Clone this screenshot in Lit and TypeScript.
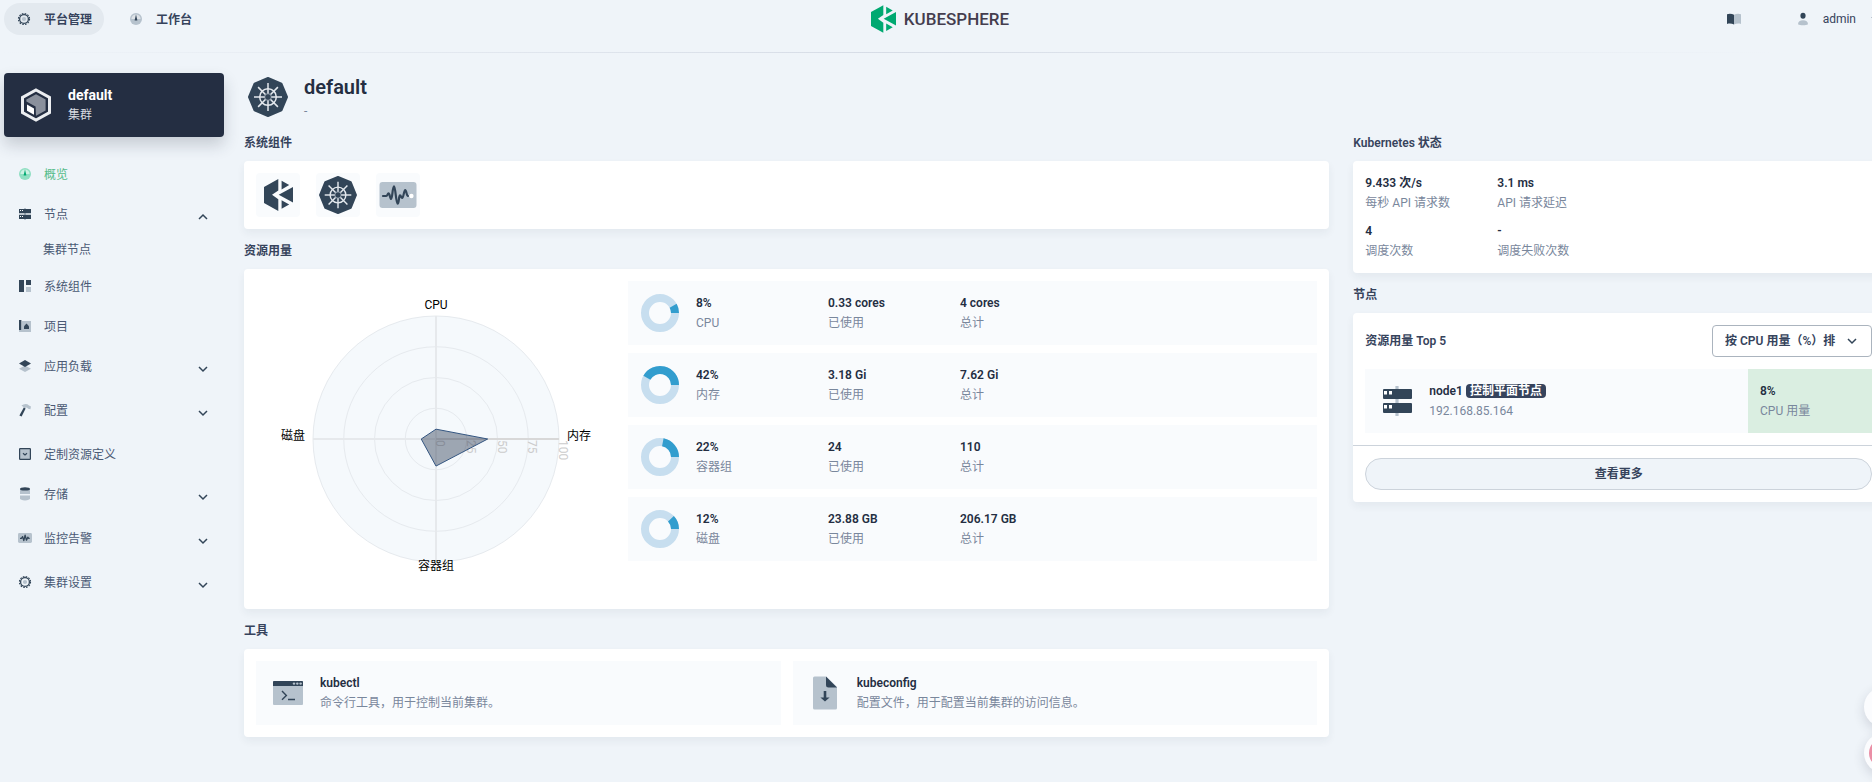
import { LitElement, html, svg, css, nothing } from "lit";
import { customElement, property, state } from "lit/decorators.js";
import { classMap } from "lit/directives/class-map.js";

const DARK = "#324558";
const PALE = "#b6c2cd";

/* ---------- icon set ---------- */

const gear = svg`
  <circle cx="8" cy="8" r="5.5" fill="none" stroke=${DARK} stroke-width="1.2" stroke-dasharray="1.6 1.28"/>
  <circle cx="8" cy="8" r="4.4" fill="none" stroke=${DARK} stroke-width="1.3"/>
  <circle cx="8" cy="8" r="2.1" fill=${PALE}/>`;

const dial = (base: string, hand: string) => svg`
  <circle cx="8" cy="8" r="6" fill=${base}/>
  <path d="M3.4 8a4.6 4.6 0 0 1 9.2 0z" fill="#fff" opacity=".55"/>
  <path d="M8 3.4 9.4 9.4H6.6z" fill=${hand}/>`;

const pulse = svg`
  <rect x="1" y="3" width="14" height="10" rx="1.4" fill=${PALE}/>
  <path d="M3 8.4h1.4L5.6 6.6l1.2 4 1.3-5.4 1.4 5 1.3-3 .9 1.2h1" fill="none" stroke=${DARK} stroke-width="1.3" stroke-linejoin="round"/>`;

const ICONS: Record<string, unknown> = {
  gear,
  dial: dial(PALE, DARK),
  dialGreen: dial("#8fdfc2", "#00a971"),
  nodes: svg`
    <path d="M7 2h2v12H7z" fill=${PALE}/>
    <path d="M2 3h12v4.200H2zM2 8.800h12V13H2z" fill=${DARK}/>
    <path d="M3 4h1v1H3zM5 4h1v1H5zM3 10h1v1H3zM5 10h1v1H5z" fill="#fff"/>`,
  components: svg`
    <path d="M2 2h5v12H2zM9 2h5v5H9z" fill=${DARK}/><path d="M9 9h5v5H9z" fill=${PALE}/>`,
  project: svg`
    <path d="M5 3h9v11H2v-2h3z" fill=${PALE}/><path d="M2 2h2.400v10H2z" fill=${DARK}/>
    <path d="M7 11V8.200L9.500 5.600 12 8.200V11z" fill=${DARK}/>`,
  layers: svg`
    <path d="M8 14 2 10.800 8 7.600l6 3.200z" fill=${PALE}/><path d="M8 9 2 5.500 8 2l6 3.500z" fill=${DARK}/>`,
  hammer: svg`
    <path d="M4.400 3.600C7 1.600 10 1.600 12 3.400l2 1.200-.6 2.600-2.200-.4-1.400-1.300-2.200.4z" fill=${PALE}/>
    <path d="m6.800 5.600 1.800 1-4 8-2.200-1.200z" fill=${DARK}/>`,
  crd: svg`
    <rect x="2.600" y="2.600" width="10.800" height="10.800" rx=".6" fill=${PALE} stroke=${DARK} stroke-width="1.200"/>
    <path d="m6 7.200 2 1.800 2-1.800" fill="none" stroke=${DARK} stroke-width="1.200"/>`,
  storage: svg`
    <path d="M3 3h10v5H3zM3 9.400h10v3.400c0 .8-2.200 1.600-5 1.600s-5-.8-5-1.600z" fill=${PALE}/>
    <ellipse cx="8" cy="2.900" rx="5" ry="1.600" fill=${DARK}/>`,
  pulse,
  book: svg`
    <path d="M1 3.200c2-.8 5-.7 7 .6v9.800c-2-1.200-5-1.300-7-.6z" fill=${DARK}/>
    <path d="M8 3.800c2-1.300 5-1.400 7-.6V13c-2-.7-5-.6-7 .6z" fill=${PALE}/>`,
  user: svg`
    <ellipse cx="8" cy="4.800" rx="2.600" ry="3" fill=${DARK}/>
    <path d="M3 13.200C3 10.400 5 9.200 8 9.200s5 1.200 5 4c-2 1.400-8 1.400-10 0z" fill=${PALE}/>`,
  down: svg`<path d="m4 6 4 4 4-4" fill="none" stroke=${DARK} stroke-width="1.500"/>`,
  up: svg`<path d="m4 10 4-4 4 4" fill="none" stroke=${DARK} stroke-width="1.500"/>`,
};

const icon = (name: string, size = 16) =>
  html`<svg width=${size} height=${size} viewBox="0 0 16 16" aria-hidden="true">${ICONS[name]}</svg>`;

const ksMark = (color: string, w: number, h: number) => html`
  <svg width=${w} height=${h} viewBox="0 0 29 32" aria-hidden="true">
    <path fill=${color} d="M0 8 14.300 0v11.500L8 15.800l6.300 4.500V32L0 24zM17.600 1.700l7.600 4.400-7.600 4.400zM29 8v15.600L14.700 15.800zM17.600 21.200l7.600 4.300-7.600 4.300z"/>
  </svg>`;

const OCTAGON = Array.from({ length: 8 }, (_, i) => {
  const a = (i * Math.PI) / 4;
  return `${(20 + 19 * Math.sin(a)).toFixed(2)},${(20 - 19 * Math.cos(a)).toFixed(2)}`;
}).join(" ");

const helm = (size: number) => html`
  <svg width=${size} height=${size} viewBox="0 0 40 40" aria-hidden="true">
    <polygon points=${OCTAGON} fill=${DARK} stroke=${DARK} stroke-width="2" stroke-linejoin="round"/>
    <g stroke="#e4e9ee" fill="none" stroke-width="1.500">
      <circle cx="20" cy="20" r="8.300"/>
      ${[0, 45, 90, 135, 180, 225, 270, 315].map(
        (a) => svg`<path d="M20 17.400V6" transform="rotate(${a} 20 20)"/>`
      )}
    </g>
    <circle cx="20" cy="20" r="3.400" fill=${DARK} stroke="#b6c2cd" stroke-width=".8"/>
  </svg>`;

const cube = html`
  <svg width="32" height="34" viewBox="0 0 32 34" aria-hidden="true">
    <path d="M16 2 29.500 9.400v15.200L16 32 2.500 24.600V9.400z" fill="none" stroke="#eceef1" stroke-width="3"/>
    <path d="M16 6.200 25.600 11.600v10.800L16 27.800l-.4-9.200-9.200-5V11.600z" fill="#8a909c"/>
    <path d="m7 16.400 7 4v6.400l-7-4z" fill="#fff"/>
  </svg>`;

const wave = html`
  <svg width="38" height="28" viewBox="0 0 38 28" aria-hidden="true">
    <rect x=".5" y="1" width="37" height="26" rx="3" fill=${PALE}/>
    <path d="M4 15h3.200c1.400 0 1.200-2.600 2.400-2.600S11 18 12.200 18s1.300-12.600 2.800-12.600S17 22.600 18.600 22.600s1-8.200 2.400-8.200.8 2.600 2.200 2.600 1.700-8 3-8 1.200 6 2.800 6" fill="none" stroke=${DARK} stroke-width="2.200" stroke-linecap="round"/>
    <circle cx="32.400" cy="15" r="2.200" fill="#fff"/>
  </svg>`;

const terminal = html`
  <svg width="40" height="40" viewBox="0 0 40 40" aria-hidden="true">
    <rect x="5" y="8" width="30" height="24" rx="1" fill=${PALE}/>
    <path d="M5 9q0-1 1-1h28q1 0 1 1v4H5z" fill=${DARK}/>
    <g fill=${PALE}><circle cx="26" cy="10.600" r="1.200"/><circle cx="29.300" cy="10.600" r="1.200"/><circle cx="32.600" cy="10.600" r="1.200"/></g>
    <path d="m14 18 4.400 4.400L14 26.800M20 26.500h7" fill="none" stroke=${DARK} stroke-width="1.400"/>
  </svg>`;

const download = html`
  <svg width="40" height="40" viewBox="0 0 40 40" aria-hidden="true">
    <path d="M10 3.500h11L32 14v21q0 1.500-1.500 1.500h-21Q8 36.500 8 35V5q0-1.500 1.500-1.500z" fill=${PALE}/>
    <path d="M21 3.500 32 14.500h-8.500q-2.500 0-2.500-2.500z" fill=${DARK}/>
    <path d="M18.700 18h2.600v6.400h3.300L20 28.600l-4.600-4.200h3.300z" fill=${DARK}/>
  </svg>`;

const server = html`
  <svg width="40" height="40" viewBox="0 0 40 40" aria-hidden="true">
    <path d="M18.400 5h3.200v30h-3.200z" fill=${PALE}/>
    <rect x="6" y="8" width="29" height="10" rx="1" fill=${DARK}/>
    <rect x="6" y="22" width="29" height="10" rx="1" fill=${DARK}/>
    <path d="M7 10h3v3.600H7zM12 10h3v3.600h-3zM7 24h3v3.600H7zM12 24h3v3.600h-3z" fill="#fff"/>
  </svg>`;

/* ---------- shared styles ---------- */

const base = css`
  * { box-sizing: border-box; }
  svg { display: block; flex: none; }
  button, select { font: inherit; color: inherit; border: 0; background: none; padding: 0; margin: 0; cursor: pointer; }
  a { color: inherit; text-decoration: none; }
  h1, h2, p, ul { margin: 0; padding: 0; }
  ul { list-style: none; }
`;

/* ---------- data ---------- */

interface NavItem { label: string; icon: string; active?: boolean; group?: boolean; children?: string[]; }

const NAV: NavItem[] = [
  { label: "概览", icon: "dialGreen", active: true },
  { label: "节点", icon: "nodes", group: true, children: ["集群节点"] },
  { label: "系统组件", icon: "components" },
  { label: "项目", icon: "project" },
  { label: "应用负载", icon: "layers", group: true },
  { label: "配置", icon: "hammer", group: true },
  { label: "定制资源定义", icon: "crd" },
  { label: "存储", icon: "storage", group: true },
  { label: "监控告警", icon: "pulse", group: true },
  { label: "集群设置", icon: "gear", group: true },
];

const USAGE = [
  { name: "CPU", percent: 8, used: "0.33 cores", total: "4 cores" },
  { name: "内存", percent: 42, used: "3.18 Gi", total: "7.62 Gi" },
  { name: "容器组", percent: 22, used: "24", total: "110" },
  { name: "磁盘", percent: 12, used: "23.88 GB", total: "206.17 GB" },
];

const STATUS = [
  ["9.433 次/s", "每秒 API 请求数"],
  ["3.1 ms", "API 请求延迟"],
  ["4", "调度次数"],
  ["-", "调度失败次数"],
];

/* ---------- elements ---------- */

@customElement("ks-topbar")
class Topbar extends LitElement {
  static styles = [base, css`
    :host { display: block; }
    .bar { display: grid; grid-template-columns: 1fr auto 1fr; align-items: start; height: 52px; margin-right: -12px; padding: 3px 0 0 4px; color: #36435c; }
    .tabs { display: flex; gap: 12px; }
    .tab { display: flex; align-items: center; gap: 12px; height: 32px; padding: 0 12px; border-radius: 16px; font-weight: 600; }
    .tab span { padding-top: 2px; }
    .tab.on { background: #e3e9ef; }
    .logo { display: flex; align-items: center; gap: 8px; height: 32px; margin-right: 8px; color: #443d4e; font: 500 17px/32px "Roboto", sans-serif; }
    .mark { margin-top: -1px; }
    .right { display: flex; justify-content: flex-end; }
    .tool { display: flex; align-items: center; gap: 12px; height: 32px; }
    .help { margin-right: 53px; }
    .rule { height: 1px; margin-right: 100px; background: linear-gradient(90deg, rgba(214, 220, 230, 0), #d6dce6 50%, rgba(214, 220, 230, 0)); }
  `];
  render() {
    return html`
      <header class="bar">
        <nav class="tabs">
          <button class="tab on">${icon("gear")}<span>平台管理</span></button>
          <button class="tab">${icon("dial")}<span>工作台</span></button>
        </nav>
        <a class="logo" href="#"><span class="mark">${ksMark("#00a971", 25, 28)}</span>KUBESPHERE</a>
        <div class="right">
          <button class="tool help" aria-label="帮助">${icon("book")}</button>
          <button class="tool">${icon("user")}admin ${icon("down")}</button>
        </div>
      </header>
      <div class="rule"></div>`;
  }
}

@customElement("ks-sidebar")
class Sidebar extends LitElement {
  @state() private open = new Set<string>(["节点"]);

  static styles = [base, css`
    :host { display: block; }
    .cluster { display: flex; align-items: center; gap: 16px; width: 100%; height: 64px; padding: 0 16px; border-radius: 4px; background: #242e42; color: #fff; text-align: left; box-shadow: 0 8px 16px rgba(36, 46, 66, .2); }
    .name { display: block; font-size: 14px; font-weight: 700; line-height: 20px; }
    .kind { display: block; line-height: 20px; color: #d8dbe1; }
    .nav { margin-top: 17px; color: #4a5974; }
    .row { display: flex; align-items: center; gap: 11px; width: 100%; height: 40px; padding: 0 13px; text-align: left; }
    .row.on { color: #55bc8a; }
    .text { flex: 1; padding-top: 2px; }
    .arrow { padding-top: 6px; }
    .group { padding-bottom: 4px; }
    .group.open { padding-bottom: 0; }
    .sub { display: flex; align-items: center; height: 32px; padding-left: 39px; }
  `];

  private toggle(label: string) {
    const next = new Set(this.open);
    next.has(label) ? next.delete(label) : next.add(label);
    this.open = next;
  }

  render() {
    return html`
      <button class="cluster">
        ${cube}<span><span class="name">default</span><span class="kind">集群</span></span>
      </button>
      <ul class="nav">
        ${NAV.map((n) => {
          if (!n.group) {
            return html`<li><a class=${classMap({ row: true, on: !!n.active })} href="#">${icon(n.icon)}<span class="text">${n.label}</span></a></li>`;
          }
          const open = this.open.has(n.label);
          return html`
            <li class=${classMap({ group: true, open })}>
              <button class="row" aria-expanded=${open ? "true" : "false"} @click=${() => this.toggle(n.label)}>
                ${icon(n.icon)}<span class="text">${n.label}</span><span class="arrow">${icon(open ? "up" : "down")}</span>
              </button>
              ${open ? n.children?.map((c) => html`<a class="sub" href="#">${c}</a>`) : nothing}
            </li>`;
        })}
      </ul>`;
  }
}

@customElement("ks-donut")
class Donut extends LitElement {
  @property({ type: Number }) percent = 0;
  static styles = [base, css`:host { display: block; }`];
  render() {
    const a = (this.percent / 100) * 2 * Math.PI;
    const x = 20 + 15 * Math.cos(a);
    const y = 20 - 15 * Math.sin(a);
    return html`
      <svg width="40" height="40" viewBox="0 0 40 40" aria-hidden="true">
        <circle cx="20" cy="20" r="15" fill="none" stroke="#c7deef" stroke-width="8"/>
        <path d="M35 20A15 15 0 ${a > Math.PI ? 1 : 0} 0 ${x} ${y}" fill="none" stroke="#329dce" stroke-width="8"/>
      </svg>`;
  }
}

@customElement("ks-radar")
class Radar extends LitElement {
  static styles = [base, css`
    :host { display: block; }
    .label { font-size: 12px; fill: #000; }
    .tick { font-size: 12px; fill: #ccc; }
  `];
  render() {
    const cx = 180, cy = 158, R = 123;
    const [cpu, mem, pod, disk] = USAGE.map((u) => (u.percent / 100) * R);
    const shape = `${cx},${cy - cpu} ${cx + mem},${cy} ${cx},${cy + pod} ${cx - disk},${cy}`;
    return html`
      <svg width="360" height="316" viewBox="0 0 360 316" role="img" aria-label="资源用量">
        <circle cx=${cx} cy=${cy} r=${R} fill="#f5f9fc"/>
        ${[0.25, 0.5, 0.75, 1].map((k) => svg`<circle cx=${cx} cy=${cy} r=${R * k} fill="none" stroke="#e6eaee"/>`)}
        <path d="M${cx} ${cy - R}V${cy + R}M${cx - R} ${cy}H${cx}" stroke="#e6e9ec" stroke-width="2"/>
        <path d="M${cx} ${cy}H${cx + R}" stroke="#d8d8d8" stroke-width="2"/>
        ${[0, 25, 50, 75, 100].map((t) => svg`<text class="tick" transform="translate(${cx + (R * t) / 100} ${cy + 1}) rotate(90)">${t}</text>`)}
        <polygon points=${shape} fill="#324158" fill-opacity=".45" stroke="#345681"/>
        <text class="label" x=${cx} y="28" text-anchor="middle">CPU</text>
        <text class="label" x="311" y="159">内存</text>
        <text class="label" x=${cx} y="289" text-anchor="middle">容器组</text>
        <text class="label" x="49" y="159" text-anchor="end">磁盘</text>
      </svg>`;
  }
}

@customElement("app-root")
class AppRoot extends LitElement {
  static styles = [base, css`
    :host { display: block; min-height: 100vh; overflow: clip; background: #eff4f9; color: #242e42; font: 12px/20px "Roboto", "Noto Sans CJK SC", sans-serif; }
    .page { display: grid; grid-template-columns: 220px minmax(0, 1fr); gap: 20px; padding: 20px 0 20px 4px; margin-right: -12px; }
    .head { display: flex; align-items: flex-start; gap: 16px; padding: 4px 4px 0; margin-bottom: 12px; }
    .title { font-size: 20px; line-height: 20px; font-weight: 600; }
    .desc { margin-top: 4px; color: #79879c; }
    .cols { display: grid; grid-template-columns: repeat(3, minmax(0, 1fr)); gap: 24px; align-items: start; }
    .main { grid-column: span 2; }
    .section { margin-bottom: 12px; }
    .heading { margin-bottom: 8px; font-size: 12px; line-height: 20px; font-weight: 600; color: #36435c; }
    .card { padding: 12px; border-radius: 4px; background: #fff; box-shadow: 0 4px 8px rgba(36, 46, 66, .06); }
    .tiles { display: flex; gap: 16px; }
    .tile { display: grid; place-items: center; width: 44px; height: 44px; border-radius: 4px; background: #f9fbfd; }
    .usage { display: grid; grid-template-columns: 360px minmax(0, 1fr); gap: 12px; }
    .rows { display: grid; gap: 8px; align-content: start; }
    .row { display: flex; align-items: center; gap: 12px; height: 64px; padding: 0 12px; background: #f9fbfd; }
    .rows .row ks-donut { margin-right: 4px; }
    .stat { width: 120px; }
    .val { font-weight: 600; }
    .key { color: #79879c; }
    .tools { display: grid; grid-template-columns: 1fr 1fr; gap: 12px; }
    .tool { width: 100%; text-align: left; }
    .tool span { display: block; }
    .status { display: grid; grid-template-columns: 120px 120px; gap: 8px 12px; }
    .top { display: flex; align-items: center; justify-content: space-between; margin-bottom: 12px; font-weight: 600; color: #36435c; }
    .picker { position: relative; }
    .sort { appearance: none; display: block; width: 160px; height: 32px; padding: 0 28px 0 12px; border: 1px solid #abb4be; border-radius: 4px; background: #fff; font-weight: 600; color: #36435c; }
    .picker svg { position: absolute; right: 12px; top: 8px; pointer-events: none; }
    .nodes { padding-right: 12px; }
    .node { display: flex; height: 64px; background: #f9fbfd; }
    .info { display: flex; align-items: center; flex: 1; gap: 12px; padding: 0 12px; }
    .load { width: 124px; padding: 12px; background: #daeee1; }
    .tag { display: inline-block; padding: 0 4px; border-radius: 4px; background: #36435c; color: #fff; line-height: 14px; }
    .foot { margin: 12px -12px 0; padding: 12px 12px 0; border-top: 1px solid #ccd3db; }
    .more { display: block; width: 100%; height: 32px; border: 1px solid #ccd3db; border-radius: 16px; background: #eff4f9; font-weight: 600; color: #36435c; }
    .float { position: fixed; right: -32px; width: 40px; height: 40px; border-radius: 50%; background: #fbfcfe; box-shadow: 0 4px 12px rgba(36, 46, 66, .16); }
    .float.first { bottom: 55px; }
    .float.second { bottom: 9px; display: grid; place-items: center; }
    .dot { width: 30px; height: 30px; border-radius: 50%; background: #ea8fa6; }
  `];

  private stat(value: unknown, label: string) {
    return html`<div class="stat"><p class="val">${value}</p><p class="key">${label}</p></div>`;
  }

  render() {
    return html`
      <ks-topbar></ks-topbar>
      <div class="page">
        <ks-sidebar></ks-sidebar>
        <main>
          <div class="head">
            ${helm(40)}
            <div><h1 class="title">default</h1><p class="desc">-</p></div>
          </div>
          <div class="cols">
            <div class="main">
              <section class="section">
                <h2 class="heading">系统组件</h2>
                <div class="card tiles">
                  <button class="tile" aria-label="KubeSphere">${ksMark(DARK, 29, 32)}</button>
                  <button class="tile" aria-label="Kubernetes">${helm(38)}</button>
                  <button class="tile" aria-label="监控">${wave}</button>
                </div>
              </section>
              <section class="section">
                <h2 class="heading">资源用量</h2>
                <div class="card usage">
                  <ks-radar></ks-radar>
                  <div class="rows">
                    ${USAGE.map((u) => html`
                      <div class="row">
                        <ks-donut .percent=${u.percent}></ks-donut>
                        ${this.stat(`${u.percent}%`, u.name)}
                        ${this.stat(u.used, "已使用")}
                        ${this.stat(u.total, "总计")}
                      </div>`)}
                  </div>
                </div>
              </section>
              <section class="section">
                <h2 class="heading">工具</h2>
                <div class="card tools">
                  <button class="row tool">${terminal}
                    <span><span class="val">kubectl</span><span class="key">命令行工具，用于控制当前集群。</span></span></button>
                  <button class="row tool">${download}
                    <span><span class="val">kubeconfig</span><span class="key">配置文件，用于配置当前集群的访问信息。</span></span></button>
                </div>
              </section>
            </div>
            <div>
              <section class="section">
                <h2 class="heading">Kubernetes 状态</h2>
                <div class="card status">${STATUS.map(([v, k]) => this.stat(v, k))}</div>
              </section>
              <section class="section">
                <h2 class="heading">节点</h2>
                <div class="card nodes">
                  <div class="top">
                    <label for="sort">资源用量 Top 5</label>
                    <div class="picker">
                      <select class="sort" id="sort"><option>按 CPU 用量（%）排</option></select>
                      ${icon("down")}
                    </div>
                  </div>
                  <div class="node">
                    <div class="info">${server}
                      <div>
                        <p class="val">node1 <span class="tag">控制平面节点</span></p>
                        <p class="key">192.168.85.164</p>
                      </div>
                    </div>
                    <div class="load"><p class="val">8%</p><p class="key">CPU 用量</p></div>
                  </div>
                  <div class="foot"><button class="more">查看更多</button></div>
                </div>
              </section>
            </div>
          </div>
        </main>
      </div>
      <button class="float first" aria-label="工具箱"></button>
      <button class="float second" aria-label="助手"><span class="dot"></span></button>`;
  }
}
